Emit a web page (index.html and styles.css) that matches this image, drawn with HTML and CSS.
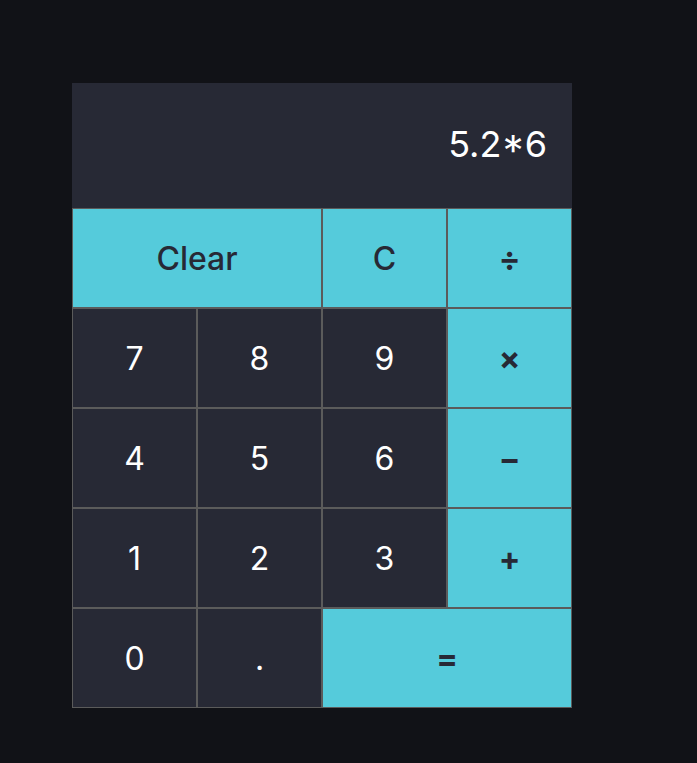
FILE: index.html
```html
<!DOCTYPE html>
<html>
<head>
<meta charset="utf-8">
<link rel="stylesheet" href="styles.css">
</head>
<body>
<div class="calc">
  <div class="display">5.2*6</div>
  <button class="btn op span2">Clear</button>
  <button class="btn op">C</button>
  <button class="btn op sym">÷</button>
  <button class="btn num">7</button>
  <button class="btn num">8</button>
  <button class="btn num">9</button>
  <button class="btn op sym">×</button>
  <button class="btn num">4</button>
  <button class="btn num">5</button>
  <button class="btn num">6</button>
  <button class="btn op sym">−</button>
  <button class="btn num">1</button>
  <button class="btn num">2</button>
  <button class="btn num">3</button>
  <button class="btn op sym">+</button>
  <button class="btn num">0</button>
  <button class="btn num">.</button>
  <button class="btn op sym span2">=</button>
</div>
</body>
</html>
```

FILE: styles.css
```css
html, body {
  margin: 0;
  padding: 0;
}
body {
  background: #111217;
  min-height: 763px;
  padding: 83px 0 0 72px;
  box-sizing: border-box;
  font-family: Inter, "Liberation Sans", sans-serif;
}
.calc {
  display: grid;
  grid-template-columns: repeat(4, 125px);
  grid-template-rows: 125px repeat(5, 100px);
  width: 500px;
}
.display {
  grid-column: span 4;
  background: #272935;
  color: #ffffff;
  font-size: 36px;
  font-weight: 400;
  display: flex;
  align-items: center;
  justify-content: flex-end;
  padding: 0 25px 4px 0;
  box-sizing: border-box;
}
.btn {
  box-sizing: border-box;
  border: 1px solid #5b5b5b;
  margin: 0;
  padding: 0;
  font-family: inherit;
  font-size: 32px;
  display: flex;
  align-items: center;
  justify-content: center;
}
.num {
  background: #272935;
  color: #ffffff;
  font-weight: 400;
}
.op {
  background: #55cbdb;
  color: #272935;
  font-weight: 500;
}
.sym {
  font-weight: 700;
}
.span2 {
  grid-column: span 2;
}
```
